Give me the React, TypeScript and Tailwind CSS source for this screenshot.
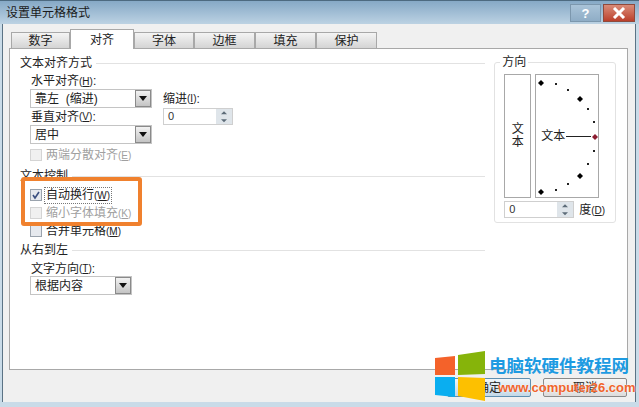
const font = { fontFamily: '"Liberation Sans", "Noto Sans CJK SC", sans-serif' };

function Arrow() {
  return (
    <div className="w-[16px] h-full flex items-center justify-center border border-[#8a8a8a] bg-gradient-to-b from-[#f2f2f2] to-[#c4c4c4]">
      <svg width="8" height="5" viewBox="0 0 8 5">
        <path d="M0 0h8L4 5z" fill="#111" />
      </svg>
    </div>
  );
}

function Select({ label, w }: { label: string; w: string }) {
  return (
    <div className={`${w} h-[19px] flex items-center justify-between border border-[#c4c4c4] bg-white pl-[4px]`}>
      <span className="text-[12px] leading-none text-[#222] whitespace-pre">{label}</span>
      <Arrow />
    </div>
  );
}

function Spin() {
  return (
    <div className="w-[70px] h-[17px] flex items-center justify-between border border-[#cfcfcf] bg-white pl-[4px]">
      <span className="text-[11px] leading-none text-[#333]">0</span>
      <div className="w-[16px] h-full flex flex-col bg-[#dfe5ea]">
        <svg className="flex-1" viewBox="0 0 16 7" width="16" height="7">
          <path d="M5 5h6L8 2z" fill="#5d6b78" />
        </svg>
        <svg className="flex-1" viewBox="0 0 16 7" width="16" height="7">
          <path d="M5 2h6L8 5z" fill="#5d6b78" />
        </svg>
      </div>
    </div>
  );
}

// access key in the small latin font, e.g. (H)
function Key({ k }: { k: string }) {
  return (
    <span className="text-[10px]">
      (<span className="underline">{k}</span>)
    </span>
  );
}

function Check({ checked, label, k, disabled }: { checked?: boolean; label: string; k: string; disabled?: boolean }) {
  return (
    <div className="h-[18px] flex items-center gap-[2px]">
      <div className={`w-[12px] h-[12px] border flex items-center justify-center ${disabled ? "border-[#d4d4d4] bg-[#f0f0f0]" : "border-[#9aa3ad] bg-[#e6e9ee]"}`}>
        {checked && (
          <svg width="10" height="10" viewBox="0 0 10 10">
            <path d="M2 5l2 3 4-6" fill="none" stroke="#3a4f80" strokeWidth="1.6" />
          </svg>
        )}
      </div>
      <span className={`text-[12px] leading-[14px] whitespace-nowrap px-px ${disabled ? "text-[#a0a0a0]" : "text-[#222]"} ${checked ? "border border-dotted border-[#777]" : "border border-transparent"}`}>
        {label}
        <Key k={k} />
      </span>
    </div>
  );
}

function GroupTitle({ label }: { label: string }) {
  return (
    <div className="flex items-center gap-[4px] h-[16px]">
      <span className="text-[12px] leading-none text-[#222] whitespace-nowrap">{label}</span>
      <div className="flex-1 h-px bg-[#e2e2e2]" />
    </div>
  );
}

function Tab({ label, w, active }: { label: string; w: string; active?: boolean }) {
  if (active) {
    return (
      <div className={`${w} h-[20px] -mb-px z-10 flex items-center justify-center border border-b-0 border-[#a8a8a8] bg-white text-[12px] text-[#222]`}>
        {label}
      </div>
    );
  }
  return (
    <div className={`${w} h-[16px] flex items-center justify-center border border-b-0 border-[#a8a8a8] bg-gradient-to-b from-[#f4f4f4] to-[#d4d4d4] text-[12px] text-[#222]`}>
      {label}
    </div>
  );
}

function Dial() {
  const big = [[5, 8], [44, 24], [44, 101], [5, 117]];
  const small = [[20, 9], [32, 15], [52, 34], [58, 47], [58, 76], [52, 89], [32, 109], [20, 115]];
  return (
    <svg className="absolute inset-0" width="62" height="122" viewBox="0 0 62 122">
      {small.map(([x, y]) => (
        <rect key={`${x}-${y}`} x={x - 1} y={y - 1} width="2" height="2" fill="#222" />
      ))}
      {big.map(([x, y]) => (
        <path key={`${x}-${y}`} d={`M${x} ${y - 3}l3 3-3 3-3-3z`} fill="#000" />
      ))}
      <line x1="30" y1="61.5" x2="55" y2="61.5" stroke="#222" />
      <path d="M59 59l3 3-3 3-3-3z" fill="#8b1c30" />
    </svg>
  );
}

export default function App() {
  return (
    <div className="relative w-[639px] h-[407px] overflow-hidden bg-[#c9dbe8] flex flex-col" style={font}>
      <div className="h-[24px] flex items-center justify-between pl-[6px] pr-[4px] bg-gradient-to-b from-[#86a9c6] to-[#bcd2e3] border-t border-[#4d6a80]">
        <span className="text-[12px] text-[#1a1a1a]">设置单元格格式</span>
        <div className="flex h-[18px] gap-[2px] self-start mt-[3px]">
          <div className="w-[31px] flex items-center justify-center border border-[#7c97ad] bg-gradient-to-b from-[#a9c3d8] to-[#8fadc6] text-[13px] font-bold leading-none text-white">?</div>
          <div className="w-[32px] flex items-center justify-center border border-[#8f4a3c] bg-gradient-to-b from-[#d98b78] to-[#bb3f2b]">
            <svg width="14" height="12" viewBox="0 0 14 12">
              <path d="M2 1l10 10M12 1L2 11" stroke="#fff" strokeWidth="3" />
            </svg>
          </div>
        </div>
      </div>

      <div className="flex-1 mx-[2px] mr-[3px] mb-[5px] bg-[#f0f0f0] border-x border-[#5b7385] flex flex-col">
        <div className="flex items-end h-[24px] pl-[8px]">
          <Tab label="数字" w="w-[59px]" />
          <Tab label="对齐" w="w-[64px]" active />
          <Tab label="字体" w="w-[60px]" />
          <Tab label="边框" w="w-[61px]" />
          <Tab label="填充" w="w-[61px]" />
          <Tab label="保护" w="w-[61px]" />
        </div>

        <div className="mx-[6px] mr-[7px] h-[322px] bg-white border border-[#a8a8a8] flex pl-[10px] pr-[11px] pt-[6px]">
          <div className="w-[466px] flex flex-col">
            <GroupTitle label="文本对齐方式" />
            <div className="pl-[10px] flex flex-col">
              <div className="h-[17px] flex items-center text-[12px] text-[#222] pt-[3px] pl-px">
                水平对齐<Key k="H" />:
              </div>
              <div className="flex items-start gap-[11px] mt-[1px]">
                <div className="flex flex-col">
                  <Select label={"靠左  (缩进)"} w="w-[122px]" />
                  <div className="h-[17px] flex items-center text-[12px] text-[#222] pl-px">
                    垂直对齐<Key k="V" />:
                  </div>
                  <Select label="居中" w="w-[122px]" />
                </div>
                <div className="flex flex-col">
                  <div className="h-[19px] flex items-center text-[12px] text-[#222]">
                    缩进<Key k="I" />:
                  </div>
                  <Spin />
                </div>
              </div>
              <div className="mt-[2px]">
                <Check label="两端分散对齐" k="E" disabled />
              </div>
            </div>

            <div className="mt-[4px]">
              <GroupTitle label="文本控制" />
            </div>
            <div className="pl-[10px] pt-[2px] flex flex-col">
              <Check checked label="自动换行" k="W" />
              <Check label="缩小字体填充" k="K" disabled />
              <Check label="合并单元格" k="M" />
            </div>

            <div className="mt-[2px]">
              <GroupTitle label="从右到左" />
            </div>
            <div className="pl-[10px] flex flex-col">
              <div className="h-[18px] flex items-center text-[12px] text-[#222] pt-[3px] pl-px">
                文字方向<Key k="T" />:
              </div>
              <Select label="根据内容" w="w-[102px]" />
            </div>
          </div>

          <div className="ml-[9px] w-[122px] h-[161px] mt-[7px] border border-[#e2e2e2] rounded-[3px] flex flex-col pl-[9px]">
            <div className="h-[12px] -mt-[8px] flex">
              <span className="-ml-[4px] bg-white px-[2px] text-[12px] leading-[14px] text-[#222]">方向</span>
            </div>
            <div className="flex gap-[4px] mt-[7px]">
              <div className="w-[27px] h-[124px] border border-[#a8a8a8] flex items-center justify-center text-[12px] leading-[13px] text-[#222] text-center">
                文<br />本
              </div>
              <div className="relative w-[64px] h-[124px] border border-[#a8a8a8] flex items-center pl-[5px]">
                <span className="text-[12px] leading-none text-[#222]">文本</span>
                <Dial />
              </div>
            </div>
            <div className="flex items-center gap-[5px] mt-[3px]">
              <Spin />
              <span className="text-[12px] leading-none text-[#222] whitespace-nowrap">
                度<Key k="D" />
              </span>
            </div>
          </div>
        </div>

        <div className="flex-1 flex justify-end items-center gap-[12px] pr-[8px] pt-[3px]">
          <div className="w-[84px] h-[19px] border border-[#5f8fb0] rounded-[2px] bg-gradient-to-b from-[#f0f6fa] to-[#c3d9e8] flex items-center justify-center text-[12px] text-[#222]">确定</div>
          <div className="w-[84px] h-[19px] border border-[#8a8a8a] rounded-[2px] bg-gradient-to-b from-[#f6f6f6] to-[#dcdcdc] flex items-center justify-center text-[12px] text-[#222]">取消</div>
        </div>
      </div>

      {/* orange highlight over the dialog */}
      <div className="absolute left-[21px] top-[177px] w-[121px] h-[49px] border-[4px] border-[#f0812e] rounded-[3px]" />

      {/* watermark */}
      <svg className="absolute left-[435px] top-[349px]" width="51" height="52" viewBox="0 0 51 52">
        <path d="M0 9l20-2v19H0z" fill="#f4622a" />
        <path d="M23 6l27-4v23l-27 1z" fill="#86b40a" />
        <path d="M0 28h20v20L0 46z" fill="#0aaef0" />
        <path d="M23 28l27 1v23l-27-5z" fill="#fdc000" />
      </svg>
      <div className="absolute left-[489px] top-[355px] text-[17.5px] leading-[22px] font-bold text-[#1e9be2] whitespace-nowrap">电脑软硬件教程网</div>
      <div className="absolute left-[498px] top-[380px] text-[13px] leading-[16px] font-bold text-[#f0642c] whitespace-nowrap [text-shadow:0_0_2px_#fff]">www.computer26.com</div>
    </div>
  );
}
